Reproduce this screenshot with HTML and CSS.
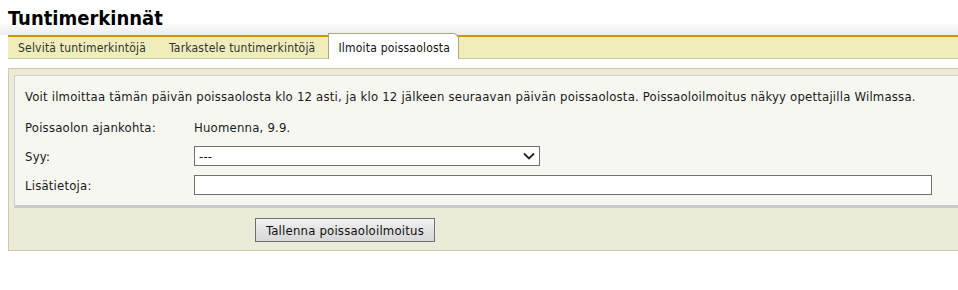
FILE: index.html
```html
<!DOCTYPE html>
<html lang="fi">
<head>
<meta charset="utf-8">
<title>Tuntimerkinnät</title>
<link rel="stylesheet" href="styles.css">
</head>
<body>
<div class="page-head">
  <h1 class="page-title">Tuntimerkinnät</h1>
</div>
<div class="content">
  <nav class="tabs">
    <a class="tab">Selvitä tuntimerkintöjä</a>
    <a class="tab">Tarkastele tuntimerkintöjä</a>
    <a class="tab tab-active">Ilmoita poissaolosta</a>
  </nav>
  <form class="panel">
    <div class="panel-inner">
      <p class="info">Voit ilmoittaa tämän päivän poissaolosta klo 12 asti, ja klo 12 jälkeen seuraavan päivän poissaolosta. Poissaoloilmoitus näkyy opettajilla Wilmassa.</p>
      <div class="row">
        <span class="label">Poissaolon ajankohta:</span>
        <span class="value">Huomenna, 9.9.</span>
      </div>
      <div class="row">
        <label class="label" for="syy">Syy:</label>
        <div class="select" id="syy">
          <span class="select-text">---</span>
          <svg class="chev" width="12" height="8" viewBox="0 0 12 8"><path d="M1 1.5 L6 6.5 L11 1.5" fill="none" stroke="#222" stroke-width="1.8"/></svg>
        </div>
      </div>
      <div class="row">
        <label class="label" for="lisa">Lisätietoja:</label>
        <input class="text-input" id="lisa" type="text">
      </div>
    </div>
    <div class="actions">
      <button type="button" class="btn">Tallenna poissaoloilmoitus</button>
    </div>
  </form>
</div>
</body>
</html>
```
FILE: styles.css
```css
html, body {
  overflow-x: hidden;
}
body {
  margin: 0;
  background: #fff;
  font-family: "DejaVu Sans Condensed", "DejaVu Sans", sans-serif;
  font-size: 13px;
  letter-spacing: 0.2px;
  color: #1a1a1a;
}
.page-head {
  height: 35px;
  background: linear-gradient(to bottom, #ffffff 0px, #ffffff 22px, #ececec 35px);
}
.page-title {
  margin: 0;
  padding: 6px 0 0 8px;
  font-size: 20px;
  line-height: 24px;
  font-weight: bold;
  letter-spacing: 0;
  color: #000;
}
.content {
  margin-left: 8px;
  width: 960px;
}
.tabs {
  display: flex;
  height: 21px;
  border-top: 2px solid #cc9600;
  border-bottom: 1px solid #c9c79a;
  background: #efedba;
}
.tab {
  display: flex;
  align-items: center;
  padding: 0 10px;
  color: #333;
  font-size: 12px;
  letter-spacing: 0.2px;
  white-space: nowrap;
}
.tab + .tab {
  margin-left: 3px;
}
.tab-active {
  background: #fff;
  color: #111;
  margin-top: -4px;
  margin-bottom: -1px;
  padding: 2px 8px 0 9px;
  border: 1px solid #aaa77e;
  border-bottom: none;
  border-top-right-radius: 6px;
}
.panel {
  margin: 9px 0 0;
  border: 1px solid #cfcca4;
  background: #ecebd9;
  padding: 6px 5px 8px;
}
.panel-inner {
  background: #f7f7f2;
  border: 1px solid #cfcfcf;
  border-bottom: 3px solid #cbcbcb;
  padding: 12px 10px 10px;
}
.info {
  margin: 0 0 11px;
  line-height: 18px;
}
.row {
  display: flex;
  align-items: center;
  min-height: 20px;
  margin-bottom: 9px;
}
.row:last-child {
  margin-bottom: 0;
}
.label {
  width: 169px;
  flex: none;
}
.select {
  width: 337px;
  height: 18px;
  border: 1px solid #707070;
  background: #fff;
  display: flex;
  align-items: center;
  justify-content: space-between;
  padding: 0 3px 0 4px;
  box-sizing: content-box;
}
.select-text {
  font-size: 13px;
}
.chev {
  margin-right: 1px;
}
.text-input {
  width: 736px;
  height: 18px;
  border: 1px solid #707070;
  margin: 0;
  padding: 0;
  background: #fff;
  font: inherit;
}
.actions {
  padding: 10px 0 0 241px;
}
.btn {
  box-sizing: border-box;
  width: 180px;
  height: 24px;
  border: 1px solid #707070;
  background: linear-gradient(to bottom, #f3f3f3, #e2e2e2 50%, #d8d8d8);
  font-family: inherit;
  font-size: 13px;
  letter-spacing: 0.2px;
  color: #111;
  padding: 0;
}
```
